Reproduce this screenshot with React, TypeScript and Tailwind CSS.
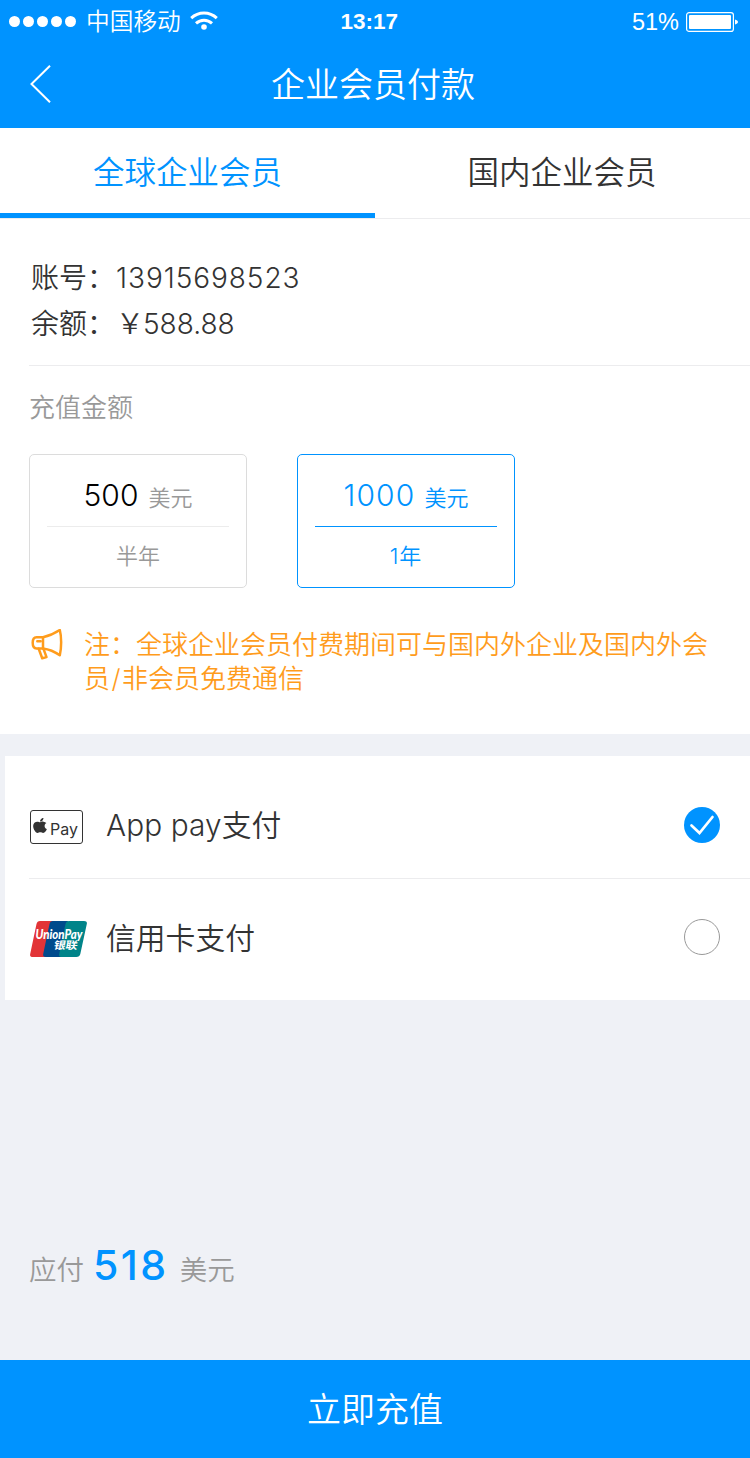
import { FaApple } from "react-icons/fa";

function StatusBar() {
  return (
    <div className="flex h-[42px] items-center text-white">
      <div className="flex flex-1 items-center pl-[9px]">
        <div className="flex gap-[3px]">
          {[0, 1, 2, 3, 4].map((i) => (
            <span key={i} className="size-[11px] rounded-full bg-white" />
          ))}
        </div>
        <span className="ml-[10px] pt-[2px] text-[23.7px] leading-[42px]">中国移动</span>
        <svg className="ml-[8px] h-[20px] w-[30px]" viewBox="0 0 30 20" fill="none" stroke="#fff">
          <path d="M2.200 7.200C9.500 .4 20.500 .4 27.800 7.200" strokeWidth="3" />
          <path d="M7 12.300c4.600-4.200 11.400-4.200 16 0" strokeWidth="3" />
          <circle cx="15" cy="16" r="2.800" fill="#fff" stroke="none" />
        </svg>
      </div>
      <span className="w-[67px] whitespace-nowrap pt-px font-['Liberation_Sans'] text-[22.5px] leading-[42px] font-bold">
        13:17
      </span>
      <div className="flex flex-1 items-center justify-end pr-[11px]">
        <span className="pt-px font-['Liberation_Sans'] text-[23.5px] leading-[42px]">51%</span>
        <svg className="mt-[2px] ml-[7px] h-[20px] w-[53px]" viewBox="0 0 53 20" fill="none">
          <rect x=".6" y=".6" width="46.800" height="18.800" rx="2.500" stroke="#fff" strokeWidth="1.200" />
          <rect x="3" y="3" width="42" height="14" rx="1" fill="#fff" />
          <path d="M49 7.500c1.600.6 3 1.500 3 2.500s-1.400 1.900-3 2.500z" fill="#fff" />
        </svg>
      </div>
    </div>
  );
}

function Header() {
  return (
    <header className="h-[128px] bg-[#0093ff] text-white">
      <StatusBar />
      <div className="flex h-[84px] items-center">
        <svg className="ml-[29px] h-[38px] w-[24px]" viewBox="0 0 24 38" fill="none" stroke="#fff" strokeWidth="2">
          <path d="M21 .8 2.500 19 21 37.200" />
        </svg>
        <h1 className="flex-1 pt-[2px] pr-[57px] text-center text-[34px] leading-[84px]">企业会员付款</h1>
      </div>
    </header>
  );
}

function Tabs() {
  return (
    <nav className="flex h-[91px] border-b border-[#ececee] text-[31.5px] leading-[85px]">
      <button className="w-[375px] border-b-[5px] border-[#0093ff] pt-[2px] text-[#0093ff]">全球企业会员</button>
      <button className="w-[375px] border-b-[5px] border-transparent pt-[2px] pr-[1px] text-[#333]">国内企业会员</button>
    </nav>
  );
}

function Plan({ amount, term, active }: { amount: string; term: string; active?: boolean }) {
  return (
    <button
      className={
        active
          ? "h-[134px] w-[218px] rounded-[5px] border border-[#0093ff] px-[17px] text-[#0093ff]"
          : "h-[134px] w-[218px] rounded-[5px] border border-[#dcdcdc] px-[17px] text-[#999]"
      }
    >
      <div
        className={
          active
            ? "flex h-[72px] items-baseline justify-center gap-[9px] border-b border-[#0093ff] pt-[9px]"
            : "flex h-[72px] items-baseline justify-center gap-[10px] border-b border-[#ececec] pt-[9px]"
        }
      >
        <span
          className={
            active ? "text-[30px] leading-[62px] tracking-[1.1px]" : "text-[30px] leading-[62px] text-black"
          }
        >
          {amount}
        </span>
        <span className="text-[22px]">{"美元"}</span>
      </div>
      <div className={active ? "h-[60px] text-[22px] leading-[59px] tracking-[1px]" : "h-[60px] text-[22px] leading-[59px]"}>
        {term}
      </div>
    </button>
  );
}

function Megaphone() {
  return (
    <svg
      className="mt-[1px] h-[32px] w-[32px] shrink-0"
      viewBox="0 0 32 32"
      fill="none"
      stroke="#ff9c1c"
      strokeWidth="2.500"
      strokeLinejoin="round"
      strokeLinecap="round"
    >
      <path d="M12 8.200H5.500C3 8.200 1.700 10.500 1.700 13.800s1.300 5.600 3.800 5.600H12" />
      <path d="M12 8.200c6-1.300 12-4 16.800-7.200 1.800 6.500 1.800 18 0 25.200C24 22.800 18 20.200 12 19.400z" />
      <path d="m7.700 19.700 3.500 9.600 4.300-1.200-3-8.300M6.300 12.200h3.400" />
    </svg>
  );
}

function ApplePayLogo() {
  return (
    <div className="mt-[3px] flex h-[34px] w-[53px] items-center rounded-[3px] border border-[#333] pl-[2px] text-[#333]">
      <FaApple className="-mt-[2px] h-[17px] w-[14px]" preserveAspectRatio="none" />
      <span className="ml-[3px] pt-[4px] text-[16px] leading-[30px] font-normal">Pay</span>
    </div>
  );
}

function UnionPayLogo() {
  return (
    <svg className="mt-[4px] h-[36px] w-[57px]" viewBox="0 0 57 36">
      <path d="M10 0h14l-8 36H3Q-.5 36 .2 33L6.500 3Q7.200 0 10 0z" fill="#e23437" />
      <path d="M23 0h15l-7 36H16Q12.500 36 13.200 33L19.500 3Q20.200 0 23 0z" fill="#004a8c" />
      <path d="M39 0h15q3.500 0 2.800 3l-6.500 30q-.7 3-4 3H32Q28.500 36 29.200 33L35.500 3Q36.200 0 39 0z" fill="#008489" />
      <text
        x="5.500"
        y="17.500"
        textLength="47"
        lengthAdjust="spacingAndGlyphs"
        className="fill-white font-['Lato'] text-[12.5px] font-black italic"
      >
        UnionPay
      </text>
      <text
        x="23"
        y="27.600"
        textLength="24"
        lengthAdjust="spacingAndGlyphs"
        transform="translate(5 0) skewX(-10)"
        className="fill-white font-['Noto_Sans_CJK_SC'] text-[10.5px] font-bold"
      >
        银联
      </text>
    </svg>
  );
}

export default function App() {
  return (
    <main className="flex h-[1458px] w-[750px] flex-col bg-[#eff1f6] font-['Inter','Noto_Sans_CJK_SC',sans-serif] font-[350]">
      <Header />
      <section className="h-[606px] bg-white">
        <Tabs />
        <div className="ml-[29px] h-[147px] border-b border-[#ececee] pt-[36px] pl-[2px] text-[28px] leading-[46px] text-[#333]">
          <p className="flex">
            <span className="w-[85px]">账号：</span>
            <span className="tracking-[0.95px]">13915698523</span>
          </p>
          <p className="flex">
            <span className="w-[85px]">余额：</span>
            <span className="w-[27px]">￥</span>
            <span>588.88</span>
          </p>
        </div>
        <h2 className="pl-[29px] text-[26px] leading-[84px] text-[#999]">充值金额</h2>
        <div className="mt-[4px] flex gap-[50px] pl-[29px]">
          <Plan amount="500" term="半年" />
          <Plan amount="1000" term="1年" active />
        </div>
        <div className="mt-[40px] flex pl-[31px] text-[#ff9c1c]">
          <Megaphone />
          <p className="ml-[21px] text-[26px] leading-[34px]">
            注：全球企业会员付费期间可与国内外企业及国内外会
            <br />
            员<span className="px-[1.5px]">/</span>非会员免费通信
          </p>
        </div>
      </section>
      <section className="mt-[22px] ml-[5px] h-[244px] bg-white text-[29.8px] text-[#333]">
        <div className="ml-[24px] flex h-[123px] items-center border-b border-[#ececee] pt-[16px] pr-[30px]">
          <div className="w-[77px] pl-[1px]">
            <ApplePayLogo />
          </div>
          <span className="flex-1 tracking-[0.1px]">App pay支付</span>
          <svg className="size-[36px]" viewBox="0 0 36 36" fill="none">
            <circle cx="18" cy="18" r="18" fill="#0093ff" />
            <path d="m7.500 18.500 8 7.500L28.500 10" stroke="#fff" strokeWidth="2.700" strokeLinecap="round" />
          </svg>
        </div>
        <div className="ml-[24px] flex h-[116px] items-center pr-[30px]">
          <div className="w-[77px] pl-[1px]">
            <UnionPayLogo />
          </div>
          <span className="flex-1 pt-[3px]">信用卡支付</span>
          <span className="size-[36px] rounded-full border border-[#999]" />
        </div>
      </section>
      <div className="mt-auto flex h-[125px] items-baseline pl-[29px] text-[27.5px] text-[#999]">
        <span>应付</span>
        <span className="ml-[9px] text-[41px] leading-[60px] font-medium tracking-[2.5px] text-[#0093ff]">518</span>
        <span className="ml-[11px]">{"美元"}</span>
      </div>
      <button className="h-[98px] bg-[#0093ff] pt-[2px] text-[34px] leading-[96px] text-white">立即充值</button>
    </main>
  );
}
